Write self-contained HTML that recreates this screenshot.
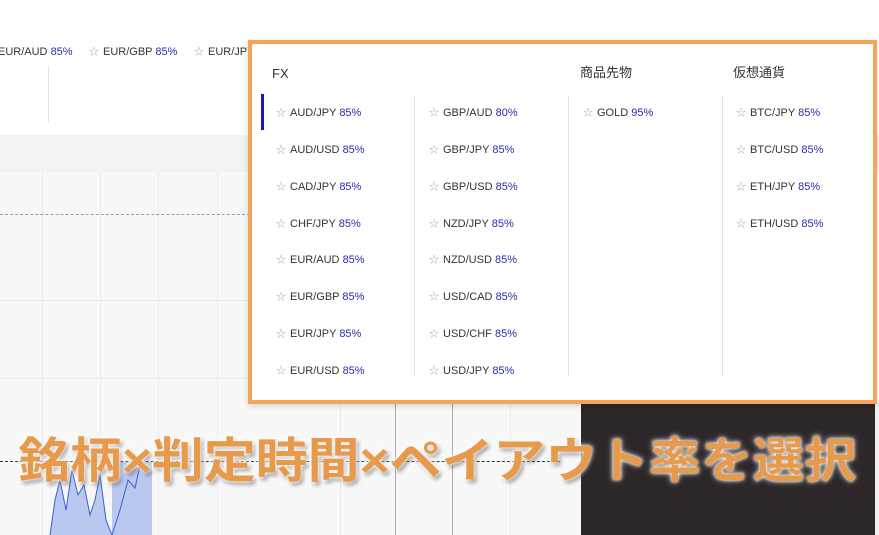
<!DOCTYPE html>
<html><head><meta charset="utf-8"><style>
*{margin:0;padding:0;box-sizing:border-box}
body{width:879px;height:535px;overflow:hidden;position:relative;background:#fff;font-family:"Liberation Sans","Noto Sans CJK JP",sans-serif}
.a{position:absolute}
.it{position:absolute;font-size:11px;line-height:13px;color:#333;white-space:nowrap}
.it b{font-weight:normal;color:#2b2bb0}
.st{color:#aaa;font-size:10px;margin-right:4px}
.hd{position:absolute;font-size:13px;line-height:15px;color:#333}
.vl{position:absolute;width:1px;background:#e4e4e4}
</style></head><body>
<div class="it" style="left:-2px;top:46px">EUR/AUD <b>85%</b></div>
<div class="it" style="left:89px;top:46px"><span class="st">☆</span>EUR/GBP <b>85%</b></div>
<div class="it" style="left:194px;top:46px"><span class="st">☆</span>EUR/JPY</div>
<div class="vl" style="left:48px;top:66px;height:56px"></div>
<div class="a" style="left:0;top:135px;width:879px;height:37px;background:#f2f2f2"></div>
<div class="a" style="left:0;top:172px;width:581px;height:363px;background:#f8f8f8"></div>
<div class="vl" style="left:42px;top:172px;height:363px;background:#ebebeb"></div>
<div class="vl" style="left:100px;top:172px;height:363px;background:#ebebeb"></div>
<div class="vl" style="left:158px;top:172px;height:363px;background:#ebebeb"></div>
<div class="vl" style="left:217px;top:172px;height:363px;background:#ebebeb"></div>
<div class="vl" style="left:340px;top:404px;height:131px;background:#ebebeb"></div>
<div class="vl" style="left:395px;top:404px;height:131px;background:#aaa"></div>
<div class="vl" style="left:452px;top:404px;height:131px;background:#aaa"></div>
<div class="vl" style="left:510px;top:404px;height:131px;background:#ebebeb"></div>
<div class="a" style="left:0;top:300px;width:250px;height:1px;background:#ebebeb"></div>
<div class="a" style="left:0;top:378px;width:250px;height:1px;background:#ebebeb"></div>
<div class="a" style="left:0;top:214px;width:250px;border-top:1px dashed #8aa0b8"></div>
<div class="a" style="left:0;top:461px;width:560px;border-top:1px dashed #333"></div>
<svg class="a" style="left:0;top:440px" width="200" height="95"><path d="M50 95 L55 60 L60 40 L66 70 L72 30 L78 55 L84 45 L90 75 L95 60 L100 35 L106 80 L112 95 Z" fill="#b8c8ee"/><rect x="112" y="22" width="40" height="73" fill="#b8c8ee"/><path d="M50 95 L55 60 L60 40 L66 70 L72 30 L78 55 L84 45 L90 75 L95 60 L100 35 L106 80 L112 95 L120 70 L128 40 L135 48 L140 25" stroke="#3a5ed8" fill="none"/></svg>
<div class="a" style="left:581px;top:403px;width:294px;height:132px;background:#2e2729"></div>
<div class="a" style="left:875px;top:403px;width:4px;height:132px;background:#eee"></div>
<div class="a" style="left:248px;top:40px;width:629px;height:364px;border:4px solid #f4a55c;background:#fff;box-shadow:0 2px 6px rgba(0,0,0,.15)"></div>
<div class="hd" style="left:272px;top:66px">FX</div>
<div class="hd" style="left:580px;top:65px">商品先物</div>
<div class="hd" style="left:733px;top:65px">仮想通貨</div>
<div class="a" style="left:261px;top:94px;width:3px;height:36px;background:#1a1ab0"></div>
<div class="vl" style="left:414px;top:96px;height:280px"></div>
<div class="vl" style="left:568px;top:96px;height:280px"></div>
<div class="vl" style="left:722px;top:96px;height:280px"></div>
<div class="it" style="left:276px;top:107px"><span class="st">☆</span>AUD/JPY <b>85%</b></div>
<div class="it" style="left:276px;top:144px"><span class="st">☆</span>AUD/USD <b>85%</b></div>
<div class="it" style="left:276px;top:181px"><span class="st">☆</span>CAD/JPY <b>85%</b></div>
<div class="it" style="left:276px;top:218px"><span class="st">☆</span>CHF/JPY <b>85%</b></div>
<div class="it" style="left:276px;top:254px"><span class="st">☆</span>EUR/AUD <b>85%</b></div>
<div class="it" style="left:276px;top:291px"><span class="st">☆</span>EUR/GBP <b>85%</b></div>
<div class="it" style="left:276px;top:328px"><span class="st">☆</span>EUR/JPY <b>85%</b></div>
<div class="it" style="left:276px;top:365px"><span class="st">☆</span>EUR/USD <b>85%</b></div>
<div class="it" style="left:429px;top:107px"><span class="st">☆</span>GBP/AUD <b>80%</b></div>
<div class="it" style="left:429px;top:144px"><span class="st">☆</span>GBP/JPY <b>85%</b></div>
<div class="it" style="left:429px;top:181px"><span class="st">☆</span>GBP/USD <b>85%</b></div>
<div class="it" style="left:429px;top:218px"><span class="st">☆</span>NZD/JPY <b>85%</b></div>
<div class="it" style="left:429px;top:254px"><span class="st">☆</span>NZD/USD <b>85%</b></div>
<div class="it" style="left:429px;top:291px"><span class="st">☆</span>USD/CAD <b>85%</b></div>
<div class="it" style="left:429px;top:328px"><span class="st">☆</span>USD/CHF <b>85%</b></div>
<div class="it" style="left:429px;top:365px"><span class="st">☆</span>USD/JPY <b>85%</b></div>
<div class="it" style="left:583px;top:107px"><span class="st">☆</span>GOLD <b>95%</b></div>
<div class="it" style="left:736px;top:107px"><span class="st">☆</span>BTC/JPY <b>85%</b></div>
<div class="it" style="left:736px;top:144px"><span class="st">☆</span>BTC/USD <b>85%</b></div>
<div class="it" style="left:736px;top:181px"><span class="st">☆</span>ETH/JPY <b>85%</b></div>
<div class="it" style="left:736px;top:218px"><span class="st">☆</span>ETH/USD <b>85%</b></div>
<div class="a" style="left:18px;top:432px;width:870px;font-size:48px;line-height:60px;font-weight:bold;color:#e89a4c;letter-spacing:-0.2px;white-space:nowrap;transform:scaleX(1.085);transform-origin:0 0;text-shadow:0 0 3px #fff,0 0 6px #fff,2px 3px 4px rgba(0,0,0,.5)">銘柄×判定時間×ペイアウト率を選択</div>
</body></html>
